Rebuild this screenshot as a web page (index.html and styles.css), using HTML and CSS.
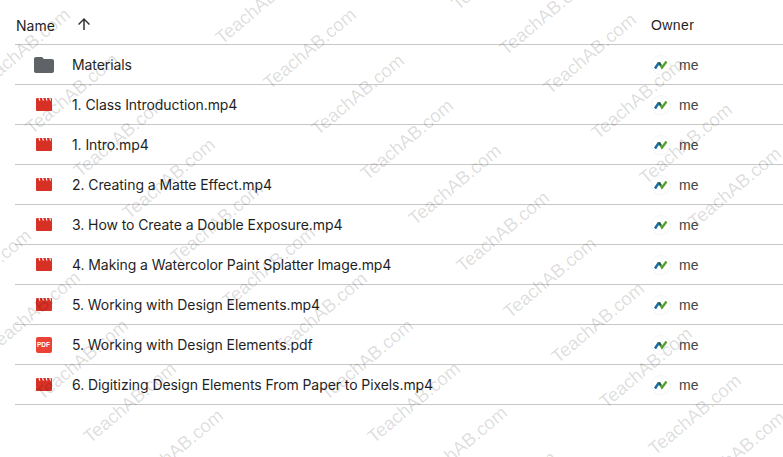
FILE: index.html
```html
<!DOCTYPE html>
<html lang="en">
<head>
    <meta charset="UTF-8">
    <meta name="viewport" content="width=device-width, initial-scale=1.0">
    <title>Drive folder</title>
    <link rel="stylesheet" href="styles.css">
</head>
<body>
    <svg class="sprites" width="0" height="0">
        <symbol id="icon-video" viewBox="0 0 16 13">
            <rect width="16" height="13" rx="1" fill="#d93025"/>
            <path d="M3 0l.8 2.6M6.6 0l.8 2.6M10.2 0l.8 2.6M13.8 0l.8 2.6" stroke="#fff" stroke-width="1.1" fill="none"/>
        </symbol>
        <symbol id="icon-avatar" viewBox="0 0 20 20">
            <circle cx="10" cy="10" r="9.5" fill="#fff" stroke="#f4f4f4"/>
            <path d="M4 13.5L8 7.5" stroke="#1a6fa8" stroke-width="2.6" fill="none"/>
            <path d="M8 7.5L11 12.5L15.5 6.5" stroke="#5aa02c" stroke-width="2.4" fill="none"/>
            <path d="M8 7.5L9.6 10.2" stroke="#17556b" stroke-width="2.2" fill="none"/>
        </symbol>
    </svg>

    <div class="list">
        <div class="header">
            <div class="name-col">
                <span class="name-label">Name</span>
                <svg class="sort-arrow" viewBox="0 0 24 24"><path d="M4 12l1.41 1.41L11 7.83V20h2V7.83l5.58 5.59L20 12l-8-8-8 8z"/></svg>
            </div>
            <div class="owner-col owner-label">Owner</div>
        </div>

        <div class="row">
            <div class="icon-cell"><svg class="folder" viewBox="0 0 20 16"><path d="M2 0h6l2 2h8c1.1 0 2 .9 2 2v10c0 1.1-.9 2-2 2H2c-1.1 0-2-.9-2-2V2C0 .9.9 0 2 0z"/></svg></div>
            <div class="file-name">Materials</div>
            <div class="owner-col"><svg class="avatar"><use href="#icon-avatar"/></svg><span class="me">me</span></div>
        </div>
        <div class="row">
            <div class="icon-cell"><svg class="video"><use href="#icon-video"/></svg></div>
            <div class="file-name">1. Class Introduction.mp4</div>
            <div class="owner-col"><svg class="avatar"><use href="#icon-avatar"/></svg><span class="me">me</span></div>
        </div>
        <div class="row">
            <div class="icon-cell"><svg class="video"><use href="#icon-video"/></svg></div>
            <div class="file-name">1. Intro.mp4</div>
            <div class="owner-col"><svg class="avatar"><use href="#icon-avatar"/></svg><span class="me">me</span></div>
        </div>
        <div class="row">
            <div class="icon-cell"><svg class="video"><use href="#icon-video"/></svg></div>
            <div class="file-name">2. Creating a Matte Effect.mp4</div>
            <div class="owner-col"><svg class="avatar"><use href="#icon-avatar"/></svg><span class="me">me</span></div>
        </div>
        <div class="row">
            <div class="icon-cell"><svg class="video"><use href="#icon-video"/></svg></div>
            <div class="file-name">3. How to Create a Double Exposure.mp4</div>
            <div class="owner-col"><svg class="avatar"><use href="#icon-avatar"/></svg><span class="me">me</span></div>
        </div>
        <div class="row">
            <div class="icon-cell"><svg class="video"><use href="#icon-video"/></svg></div>
            <div class="file-name">4. Making a Watercolor Paint Splatter Image.mp4</div>
            <div class="owner-col"><svg class="avatar"><use href="#icon-avatar"/></svg><span class="me">me</span></div>
        </div>
        <div class="row">
            <div class="icon-cell"><svg class="video"><use href="#icon-video"/></svg></div>
            <div class="file-name">5. Working with Design Elements.mp4</div>
            <div class="owner-col"><svg class="avatar"><use href="#icon-avatar"/></svg><span class="me">me</span></div>
        </div>
        <div class="row">
            <div class="icon-cell"><div class="pdf">PDF</div></div>
            <div class="file-name">5. Working with Design Elements.pdf</div>
            <div class="owner-col"><svg class="avatar"><use href="#icon-avatar"/></svg><span class="me">me</span></div>
        </div>
        <div class="row">
            <div class="icon-cell"><svg class="video"><use href="#icon-video"/></svg></div>
            <div class="file-name">6. Digitizing Design Elements From Paper to Pixels.mp4</div>
            <div class="owner-col"><svg class="avatar"><use href="#icon-avatar"/></svg><span class="me">me</span></div>
        </div>
    </div>

    <!-- watermark, each one placed by where it starts in the shot -->
    <svg class="watermark" viewBox="0 0 783 457">
      <g transform="translate(7 3)">
        <text transform="translate(215 42) rotate(-40)">TeachAB.com</text>
        <text transform="translate(263 87) rotate(-40)">TeachAB.com</text>
        <text transform="translate(311 133) rotate(-40)">TeachAB.com</text>
        <text transform="translate(360 178) rotate(-40)">TeachAB.com</text>
        <text transform="translate(408 223) rotate(-40)">TeachAB.com</text>
        <text transform="translate(456 270) rotate(-40)">TeachAB.com</text>
        <text transform="translate(503 316) rotate(-40)">TeachAB.com</text>
        <text transform="translate(551 361) rotate(-40)">TeachAB.com</text>
        <text transform="translate(599 406) rotate(-40)">TeachAB.com</text>
        <text transform="translate(648 453) rotate(-40)">TeachAB.com</text>
        <text transform="translate(692 490) rotate(-40)">TeachAB.com</text>

        <text transform="translate(-23 87) rotate(-40)">TeachAB.com</text>
        <text transform="translate(25 132) rotate(-40)">TeachAB.com</text>
        <text transform="translate(73 175) rotate(-40)">TeachAB.com</text>
        <text transform="translate(122 217) rotate(-40)">TeachAB.com</text>
        <text transform="translate(170 261) rotate(-40)">TeachAB.com</text>
        <text transform="translate(222 305) rotate(-40)">TeachAB.com</text>
        <text transform="translate(274 351) rotate(-40)">TeachAB.com</text>
        <text transform="translate(320 398) rotate(-40)">TeachAB.com</text>
        <text transform="translate(367 441) rotate(-40)">TeachAB.com</text>
        <text transform="translate(414 485) rotate(-40)">TeachAB.com</text>
        <text transform="translate(463 530) rotate(-40)">TeachAB.com</text>

        <text transform="translate(451 8) rotate(-40)">TeachAB.com</text>
        <text transform="translate(499 53) rotate(-40)">TeachAB.com</text>
        <text transform="translate(543 92) rotate(-40)">TeachAB.com</text>
        <text transform="translate(591 137) rotate(-40)">TeachAB.com</text>
        <text transform="translate(639 182) rotate(-40)">TeachAB.com</text>
        <text transform="translate(688 226) rotate(-40)">TeachAB.com</text>

        <text transform="translate(-62 308) rotate(-40)">TeachAB.com</text>
        <text transform="translate(-13 350) rotate(-40)">TeachAB.com</text>
        <text transform="translate(35 398) rotate(-40)">TeachAB.com</text>
        <text transform="translate(83 441) rotate(-40)">TeachAB.com</text>
        <text transform="translate(130 488) rotate(-40)">TeachAB.com</text>
      </g>
    </svg>
</body>
</html>
```

FILE: styles.css
```css
body {
    margin: 0;
    background: #fff;
    font-family: Inter, Roboto, sans-serif;
    font-size: 14px;
    color: #1f1f1f;
    overflow: hidden;
}
.sprites {
    display: block;
}
.list {
    padding-left: 15px;
}
.header {
    display: flex;
    align-items: center;
    height: 38px;
    padding-top: 6px;
    border-bottom: 1px solid #c7c7c7;
}
.name-col {
    flex: 1;
    display: flex;
    align-items: center;
    padding-left: 1px;
}
.name-label {
    width: 59px;
}
.sort-arrow {
    width: 18px;
    height: 18px;
    margin-top: -2px;
    fill: #333;
}
.owner-col {
    width: 132px;
    display: flex;
    align-items: center;
    font-family: "Liberation Sans", Arial, sans-serif;
}
.owner-label {
    letter-spacing: 0.4px;
}
.row {
    display: flex;
    align-items: center;
    height: 39px;
    border-bottom: 1px solid #c7c7c7;
}
.icon-cell {
    width: 57px;
    display: flex;
    justify-content: center;
}
.file-name {
    flex: 1;
    letter-spacing: -0.08px;
}
.folder {
    width: 20px;
    height: 16px;
    fill: #5f6368;
}
.video {
    width: 16px;
    height: 13px;
    display: block;
}
.pdf {
    width: 16px;
    height: 16px;
    border-radius: 2px;
    background: #ea4335;
    color: #fff;
    font-family: "Liberation Sans", Arial, sans-serif;
    font-size: 6.5px;
    font-weight: bold;
    line-height: 16px;
    text-align: center;
}
.avatar {
    width: 20px;
    height: 20px;
    margin-right: 8px;
}
.me {
    color: #444746;
}
.watermark {
    position: absolute;
    left: 0;
    top: 0;
    width: 783px;
    height: 457px;
    pointer-events: none;
}
.watermark text {
    font-family: "Liberation Sans", Arial, sans-serif;
    font-size: 18.5px;
    fill: #000;
    fill-opacity: 0.15;
}
```
